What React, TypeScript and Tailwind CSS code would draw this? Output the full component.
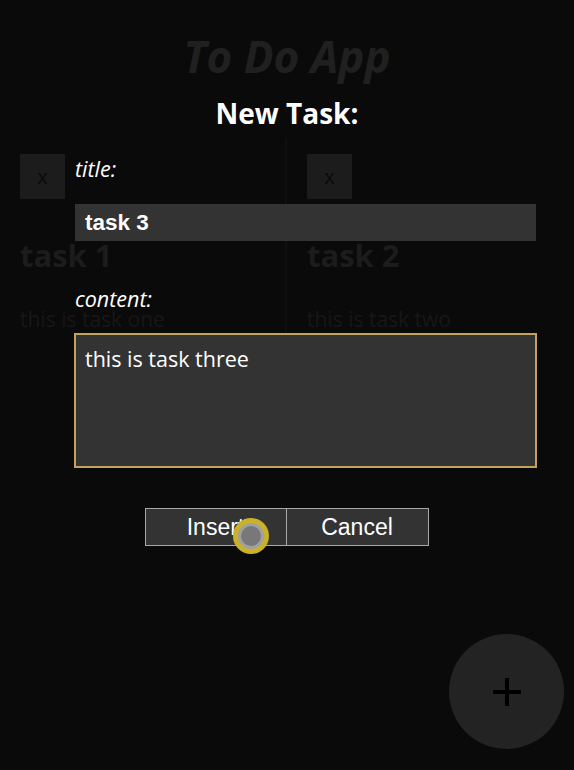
import React, { useState } from 'react';

const FONT_UI = { fontFamily: '"Open Sans", "Noto Sans", sans-serif' };
const FONT_ARIAL = { fontFamily: '"Liberation Sans", Arial, sans-serif' };

const TASKS = [
    { id: 1, title: 'task 1', content: 'this is task one' },
    { id: 2, title: 'task 2', content: 'this is task two' },
];

// Card in the dimmed page behind the dialog
const TaskCard: React.FC<{ title: string, content: string, last: boolean }> = ({ title, content, last }) => (
    <div className={`px-5 pt-4 pb-6 ${last ? '' : 'border-r-2 border-[#101010]'}`}>
        <button className="w-[45px] h-[45px] bg-[#1c1c1c] text-[#0a0a0a] text-xl flex items-center justify-center" style={FONT_ARIAL}>x</button>
        <h2 className="mt-[36px] text-[31px] font-bold text-[#1c1c1c] leading-[40px]" style={FONT_UI}>{title}</h2>
        <p className="mt-[30px] text-[21px] text-[#171717] leading-[28px]" style={FONT_UI}>{content}</p>
    </div>
);

export default function App() {
    const [title, setTitle] = useState('task 3');
    const [content, setContent] = useState('this is task three');

    return (
        <div className="relative w-[574px] h-[770px] bg-[#0a0a0a] overflow-hidden">
            {/* Page behind the dialog */}
            <div className="pt-[27px]">
                <h1 className="text-center text-[44px] font-bold italic text-[#202020] leading-[58px]" style={FONT_UI}>To Do App</h1>
                <div className="grid grid-cols-2 mt-[53px]">
                    {TASKS.map((t, i) => (
                        <TaskCard key={t.id} title={t.title} content={t.content} last={i === TASKS.length - 1} />
                    ))}
                </div>
            </div>

            {/* Add button */}
            <button className="absolute left-[449px] top-[634px] w-[115px] h-[115px] rounded-full bg-[#232323] flex items-center justify-center">
                <svg width="32" height="32" viewBox="0 0 32 32">
                    <path d="M16 2v28M2 16h28" stroke="#000" strokeWidth="4" />
                </svg>
            </button>

            {/* New task dialog */}
            <div className="absolute inset-x-0 top-0 pt-[94px] flex flex-col">
                <h2 className="text-center text-white text-[28px] font-bold leading-[38px]" style={FONT_UI}>New Task:</h2>
                <div className="px-[75px] mt-[23px]">
                    <label className="block text-white italic text-[21.5px] leading-[28px]" style={FONT_UI}>title:</label>
                    <input
                        value={title}
                        onChange={e => setTitle(e.target.value)}
                        className="mt-[21px] w-[461px] h-[37px] bg-[#333333] text-white font-bold text-[22.5px] px-[10px] outline-none"
                        style={FONT_ARIAL}
                    />
                    <label className="block mt-[44px] text-white italic text-[21.5px] leading-[28px]" style={FONT_UI}>content:</label>
                    <textarea
                        value={content}
                        onChange={e => setContent(e.target.value)}
                        className="block mt-[20px] -ml-px w-[463px] h-[135px] bg-[#333333] border-2 border-[#c4a25e] text-white text-[21.5px] leading-[30px] px-[9px] py-[9px] resize-none outline-none"
                        style={FONT_UI}
                    />
                </div>
                <div className="flex justify-center mt-[40px] pr-[1px]">
                    <button className="w-[142px] h-[38px] bg-[#333333] border border-[#a8a8a8] text-white text-[23px] leading-none" style={FONT_ARIAL}>Insert</button>
                    <button className="w-[142px] h-[38px] bg-[#333333] border border-l-0 border-[#a8a8a8] text-white text-[23px] leading-none" style={FONT_ARIAL}>Cancel</button>
                </div>
            </div>

            {/* Touch indicator */}
            <div className="absolute left-[233px] top-[518px] w-[36px] h-[36px] rounded-full bg-[#c9b22a] flex items-center justify-center">
                <div className="w-[26px] h-[26px] rounded-full bg-[#a0a0a0] flex items-center justify-center">
                    <div className="w-[20px] h-[20px] rounded-full bg-[#787878]" />
                </div>
            </div>
        </div>
    );
}
